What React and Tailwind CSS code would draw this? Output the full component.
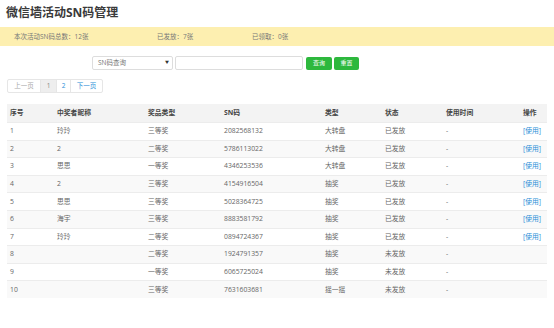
const rows = [
  ['1', '玲玲', '三等奖', '2082568132', '大转盘', '已发放', true],
  ['2', '2', '二等奖', '5786113022', '大转盘', '已发放', true],
  ['3', '思思', '一等奖', '4346253536', '大转盘', '已发放', true],
  ['4', '2', '三等奖', '4154916504', '抽奖', '已发放', true],
  ['5', '思思', '三等奖', '5028364725', '抽奖', '已发放', true],
  ['6', '海宇', '三等奖', '8883581792', '抽奖', '已发放', true],
  ['7', '玲玲', '二等奖', '0894724367', '抽奖', '已发放', true],
  ['8', '', '二等奖', '1924791357', '抽奖', '未发放', false],
  ['9', '', '一等奖', '6065725024', '抽奖', '未发放', false],
  ['10', '', '三等奖', '7631603681', '摇一摇', '未发放', false],
]

const cols = 'grid grid-cols-[47px_91px_76px_101px_60px_61px_77px_1fr]'

export default function App() {
  return (
    <div
      className="w-[554px] h-[328px] bg-white text-[#555] overflow-hidden"
      style={{ fontFamily: '"Open Sans", "Noto Sans CJK SC", sans-serif' }}
    >
      <h1 className="px-[6px] pt-[4px] h-[27px] text-[12px] font-bold text-[#3a3a3a] leading-[18px]">
        微信墙活动SN码管理
      </h1>
      <div className="h-[19px] bg-[#fdefb0] flex items-center text-[6.5px] text-[#777]">
        <span className="w-[157px] pl-[14px]">本次活动SN码总数：12张</span>
        <span className="w-[95px]">已发放：7张</span>
        <span>已领取：0张</span>
      </div>

      <div className="flex items-center gap-[2px] pl-[92px] mt-[10px] h-[14px]">
        <div className="w-[81px] h-[14px] border border-[#ddd] rounded-[2px] flex items-center justify-between pl-[5px] pr-[3px] text-[6.5px] text-[#777]">
          <span>SN码查询</span>
          <span className="text-[4px] text-[#333]">▼</span>
        </div>
        <div className="w-[128px] h-[14px] border border-[#ddd] rounded-[2px]"></div>
        <button className="w-[26px] h-[13px] bg-[#2db83d] rounded-[2px] text-white text-[6px] ml-[1px]">
          查询
        </button>
        <button className="w-[25px] h-[13px] bg-[#2db83d] rounded-[2px] text-white text-[6px]">
          重置
        </button>
      </div>

      <div className="ml-[7px] mt-[9px] flex h-[14px] w-fit border border-[#e6e6e6] rounded-[2px] text-[6.5px]">
        <span className="w-[33px] flex items-center justify-center text-[#aaa] border-r border-[#e6e6e6]">
          上一页
        </span>
        <span className="w-[16px] flex items-center justify-center bg-[#eee] text-[#888] border-r border-[#e6e6e6]">
          1
        </span>
        <span className="w-[14px] flex items-center justify-center text-[#2a8fd8] border-r border-[#e6e6e6]">
          2
        </span>
        <span className="w-[31px] flex items-center justify-center text-[#2a8fd8]">
          下一页
        </span>
      </div>

      <div className="mx-[7px] mt-[11px] text-[6.8px]">
        <div className={`${cols} h-[18px] items-center bg-[#f3f3f3] font-bold text-[#444]`}>
          <span className="pl-[3px]">序号</span>
          <span className="pl-[3px]">中奖者昵称</span>
          <span className="pl-[3px]">奖品类型</span>
          <span className="pl-[3px]">SN码</span>
          <span className="pl-[3px]">类型</span>
          <span className="pl-[3px]">状态</span>
          <span className="pl-[3px]">使用时间</span>
          <span className="pl-[3px]">操作</span>
        </div>
        {rows.map((r, i) => (
          <div
            key={r[0]}
            className={`${cols} h-[17.6px] items-center border-t border-[#ececec] text-[#666] ${
              i % 2 === 1 ? 'bg-[#f9f9f9]' : 'bg-white'
            }`}
          >
            <span className="pl-[3px]">{r[0]}</span>
            <span className="pl-[3px]">{r[1]}</span>
            <span className="pl-[3px]">{r[2]}</span>
            <span className="pl-[3px]">{r[3]}</span>
            <span className="pl-[3px]">{r[4]}</span>
            <span className="pl-[3px]">{r[5]}</span>
            <span className="pl-[3px]">-</span>
            <span className="pl-[3px] text-[#2a8fd8]">{r[6] ? '[使用]' : ''}</span>
          </div>
        ))}
      </div>
    </div>
  )
}
